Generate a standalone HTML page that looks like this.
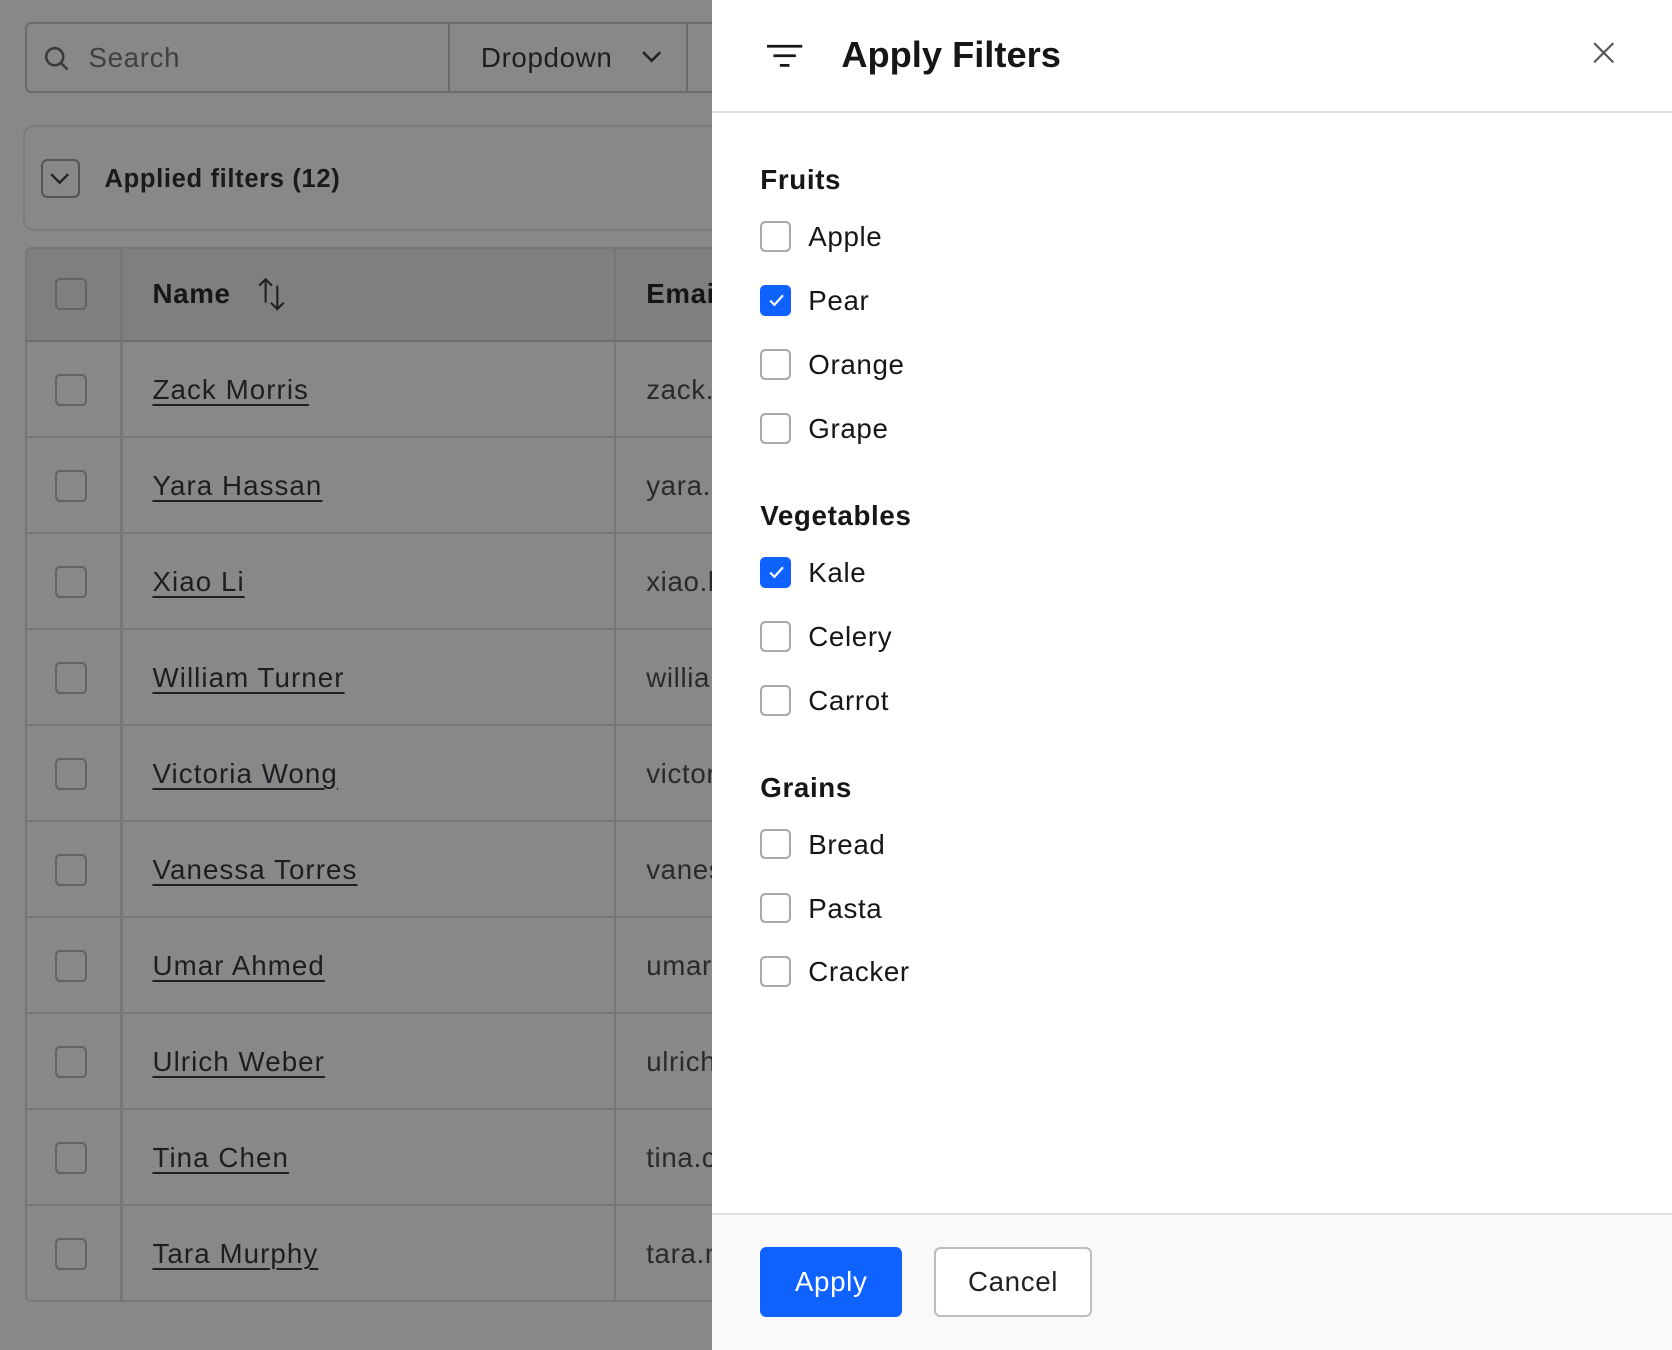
<!DOCTYPE html>
<html><head><meta charset="utf-8"><style>
*{box-sizing:border-box;margin:0;padding:0}
html,body{width:1672px;height:1350px;overflow:hidden;background:#888}
body{font-family:"Liberation Sans",sans-serif}
#w{position:absolute;left:0;top:0;width:1568px;height:1266px;zoom:1.06633;background:#888;overflow:hidden;letter-spacing:0.6px}
.a{position:absolute}
.cb{position:absolute;width:30px;height:30px;border:2px solid #636363;border-radius:5px}
.name{position:absolute;left:143px;font-size:26px;color:#1e1e22;text-decoration:underline;text-underline-offset:5px;text-decoration-thickness:2px;white-space:nowrap;letter-spacing:1px}
.em{position:absolute;left:606px;font-size:26px;color:#2a2a2a;white-space:nowrap}
.row{position:absolute;left:23px;width:660px;height:90px;border-top:2px solid #777}
.pcb{position:absolute;left:713px;width:29px;height:29px;border:2px solid #a8a8ad;border-radius:5px;background:#fff}
.pcb.on{background:#0f62fe;border-color:#0f62fe}
.lbl{position:absolute;left:758px;font-size:26px;color:#161616;line-height:30px}
.h{position:absolute;left:713px;font-size:26px;font-weight:bold;color:#161616;line-height:30px}
</style></head><body><div id="w">
<div class="a" style="left:23px;top:21px;width:680px;height:66px;border:2px solid #6c6c6c;border-radius:6px"></div>
<svg class="a" style="left:40px;top:42px" width="26" height="26" viewBox="0 0 26 26"><circle cx="11" cy="11" r="8" fill="none" stroke="#3a3a3a" stroke-width="2.4"/><line x1="17" y1="17" x2="23" y2="23" stroke="#3a3a3a" stroke-width="2.4"/></svg>
<div class="a" style="left:83px;top:39px;font-size:26px;color:#404040">Search</div>
<div class="a" style="left:420px;top:21px;width:2px;height:66px;background:#6c6c6c"></div>
<div class="a" style="left:451px;top:39px;font-size:26px;color:#1e1e1e">Dropdown</div>
<svg class="a" style="left:601px;top:46px" width="20" height="14" viewBox="0 0 20 14"><path d="M2 3l8 8 8-8" fill="none" stroke="#222" stroke-width="2.4"/></svg>
<div class="a" style="left:643px;top:21px;width:2px;height:66px;background:#6c6c6c"></div>
<div class="a" style="left:22px;top:117px;width:680px;height:100px;border:2px solid #7c7c7c;border-radius:10px"></div>
<div class="a" style="left:38px;top:149px;width:37px;height:37px;border:2px solid #555;border-radius:6px"></div>
<svg class="a" style="left:46px;top:160px" width="20" height="14" viewBox="0 0 20 14"><path d="M2 3l8 8 8-8" fill="none" stroke="#222" stroke-width="2.2"/></svg>
<div class="a" style="left:98px;top:154px;font-size:24px;font-weight:bold;color:#1a1a1a;line-height:30px">Applied filters (12)</div>
<div class="a" style="left:23px;top:232px;width:680px;height:989px;border:2px solid #777;border-radius:6px;overflow:hidden">
<div class="a" style="left:0;top:0;width:680px;height:87px;background:#7f7f7f"></div>
</div>
<div class="a" style="left:113px;top:233px;width:2px;height:987px;background:#777"></div>
<div class="a" style="left:576px;top:233px;width:2px;height:987px;background:#777"></div>
<div class="cb" style="left:52px;top:261px"></div>
<div class="a" style="left:143px;top:261px;font-size:26px;font-weight:bold;color:#161616">Name</div>
<svg class="a" style="left:240px;top:258px" width="30" height="36" viewBox="0 0 30 36"><path d="M9 26V4M3 10l6-6 6 6M20 10v22M14 26l6 6 6-6" fill="none" stroke="#222" stroke-width="2"/></svg>
<div class="a" style="left:606px;top:261px;font-size:26px;font-weight:bold;color:#161616">Email</div>
<div class="row" style="top:319px;border-top-color:#6e6e6e"></div>
<div class="row" style="top:409px"></div><div class="row" style="top:499px"></div><div class="row" style="top:589px"></div><div class="row" style="top:679px"></div><div class="row" style="top:769px"></div><div class="row" style="top:859px"></div><div class="row" style="top:949px"></div><div class="row" style="top:1039px"></div><div class="row" style="top:1129px"></div>
<div class="cb" style="left:52px;top:351px"></div><div class="name" style="top:351px">Zack Morris</div><div class="em" style="top:351px">zack.morris</div>
<div class="cb" style="left:52px;top:441px"></div><div class="name" style="top:441px">Yara Hassan</div><div class="em" style="top:441px">yara.hassan</div>
<div class="cb" style="left:52px;top:531px"></div><div class="name" style="top:531px">Xiao Li</div><div class="em" style="top:531px">xiao.li</div>
<div class="cb" style="left:52px;top:621px"></div><div class="name" style="top:621px">William Turner</div><div class="em" style="top:621px">william</div>
<div class="cb" style="left:52px;top:711px"></div><div class="name" style="top:711px">Victoria Wong</div><div class="em" style="top:711px">victoria</div>
<div class="cb" style="left:52px;top:801px"></div><div class="name" style="top:801px">Vanessa Torres</div><div class="em" style="top:801px">vanessa</div>
<div class="cb" style="left:52px;top:891px"></div><div class="name" style="top:891px">Umar Ahmed</div><div class="em" style="top:891px">umar</div>
<div class="cb" style="left:52px;top:981px"></div><div class="name" style="top:981px">Ulrich Weber</div><div class="em" style="top:981px">ulrich</div>
<div class="cb" style="left:52px;top:1071px"></div><div class="name" style="top:1071px">Tina Chen</div><div class="em" style="top:1071px">tina.chen</div>
<div class="cb" style="left:52px;top:1161px"></div><div class="name" style="top:1161px">Tara Murphy</div><div class="em" style="top:1161px">tara.m</div>
<div class="a" style="left:668px;top:0;width:900px;height:1266px;background:#fff">
<div class="a" style="left:0;top:104px;width:900px;height:2px;background:#e0e0e6"></div>
<div class="a" style="left:0;top:1138px;width:900px;height:128px;background:#f9f9f9;border-top:2px solid #e0e0e6"></div>
</div>
<svg class="a" style="left:718px;top:40px" width="36" height="26" viewBox="0 0 36 26"><path d="M1 3h33M7 12h21M13 21h9" stroke="#161616" stroke-width="2.6"/></svg>
<div class="a" style="left:789px;top:32px;font-size:34px;font-weight:bold;color:#161616;line-height:40px;letter-spacing:0">Apply Filters</div>
<svg class="a" style="left:1493px;top:38px" width="22" height="22" viewBox="0 0 22 22"><path d="M2 2l18 18M20 2L2 20" stroke="#555" stroke-width="2"/></svg>
<div class="h" style="top:154px">Fruits</div>
<div class="pcb" style="top:207px"></div><div class="lbl" style="top:207px">Apple</div>
<div class="pcb on" style="top:267px"></div><svg class="a" style="left:719px;top:273px" width="18" height="17" viewBox="0 0 18 17"><path d="M3 9l4 4 8-9" fill="none" stroke="#fff" stroke-width="2"/></svg><div class="lbl" style="top:267px">Pear</div>
<div class="pcb" style="top:327px"></div><div class="lbl" style="top:327px">Orange</div>
<div class="pcb" style="top:387px"></div><div class="lbl" style="top:387px">Grape</div>
<div class="h" style="top:469px">Vegetables</div>
<div class="pcb on" style="top:522px"></div><svg class="a" style="left:719px;top:528px" width="18" height="17" viewBox="0 0 18 17"><path d="M3 9l4 4 8-9" fill="none" stroke="#fff" stroke-width="2"/></svg><div class="lbl" style="top:522px">Kale</div>
<div class="pcb" style="top:582px"></div><div class="lbl" style="top:582px">Celery</div>
<div class="pcb" style="top:642px"></div><div class="lbl" style="top:642px">Carrot</div>
<div class="h" style="top:724px">Grains</div>
<div class="pcb" style="top:777px"></div><div class="lbl" style="top:777px">Bread</div>
<div class="pcb" style="top:837px"></div><div class="lbl" style="top:837px">Pasta</div>
<div class="pcb" style="top:897px"></div><div class="lbl" style="top:897px">Cracker</div>
<div class="a" style="left:713px;top:1169px;width:133px;height:66px;background:#0f62fe;border-radius:6px;color:#fff;font-size:26px;line-height:66px;text-align:center">Apply</div>
<div class="a" style="left:876px;top:1169px;width:148px;height:66px;background:#fff;border:2px solid #bdbdbd;border-radius:6px;color:#222;font-size:26px;line-height:62px;text-align:center">Cancel</div>
</div></body></html>
